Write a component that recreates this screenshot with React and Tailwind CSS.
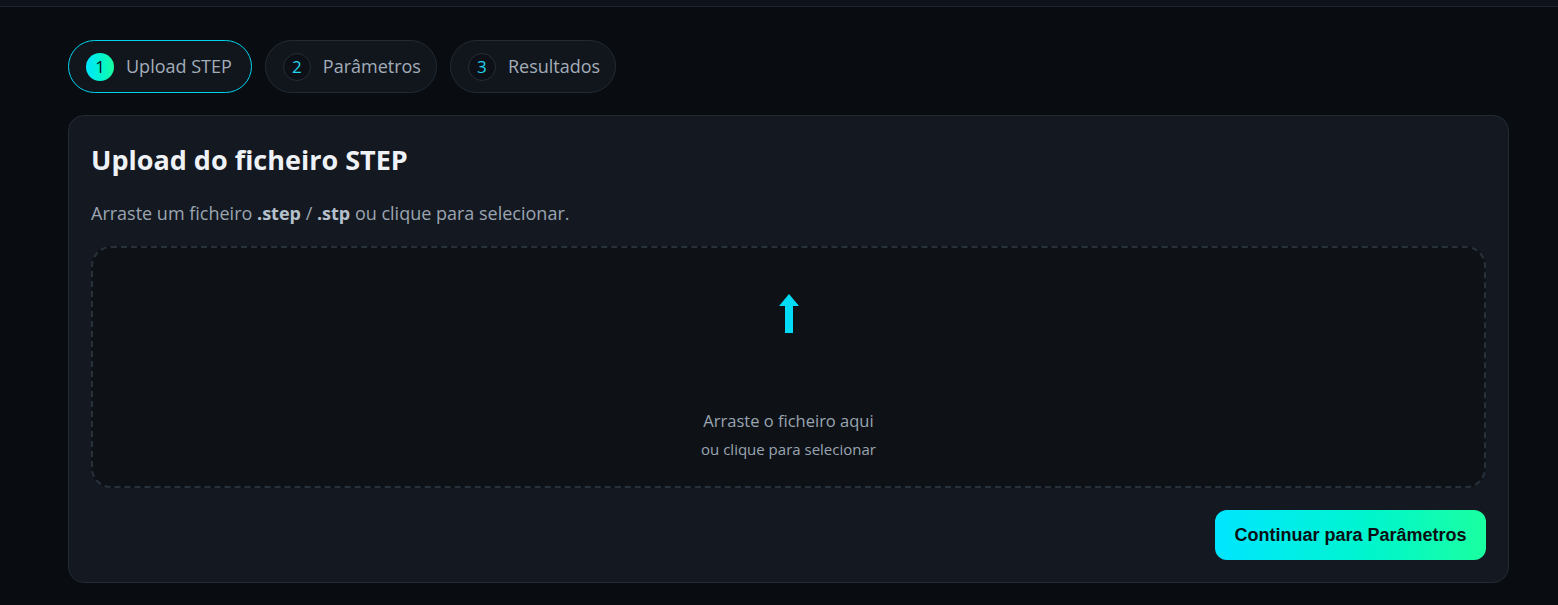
export default function App() {
  const font = { fontFamily: '"Open Sans", "Noto Sans", sans-serif' };
  return (
    <div className="min-h-[605px] w-full bg-[#090d11] text-[#9aa5b1]" style={font}>
      <div className="h-[7px] bg-[#0e121a] border-b border-[#1f2630]" />
      <div className="ml-[68px] w-[1441px] pt-[33px]">
        <div className="flex gap-[13px]">
          <div className="flex h-[53px] items-center gap-[12px] rounded-full border border-[#00d4ee] bg-[#11161d] pl-[17px] pr-[19px]">
            <span className="flex h-[28px] w-[28px] items-center justify-center rounded-full bg-gradient-to-r from-[#00e5ff] to-[#1affa0] text-[17px] text-[#0a0f14]">1</span>
            <span className="text-[18px] leading-[26px] text-[#a3adb9] -translate-y-[1px]">Upload STEP</span>
          </div>
          <div className="flex h-[53px] items-center gap-[12px] rounded-full border border-[#222a33] bg-[#11161d] pl-[17px] pr-[15px]">
            <span className="flex h-[28px] w-[28px] items-center justify-center rounded-full border border-[#252d36] bg-[#0d1117] text-[17px] text-[#22d3ee]">2</span>
            <span className="text-[18px] leading-[26px] text-[#a3adb9] -translate-y-[1px]">Parâmetros</span>
          </div>
          <div className="flex h-[53px] items-center gap-[12px] rounded-full border border-[#222a33] bg-[#11161d] pl-[17px] pr-[15px]">
            <span className="flex h-[28px] w-[28px] items-center justify-center rounded-full border border-[#252d36] bg-[#0d1117] text-[17px] text-[#22d3ee]">3</span>
            <span className="text-[18px] leading-[26px] text-[#a3adb9] -translate-y-[1px]">Resultados</span>
          </div>
        </div>

        <div className="mt-[22px] rounded-[16px] border border-[#232a33] bg-[#141820] px-[22px] pt-[26px] pb-[22px]">
          <h1 className="text-[27px] font-bold leading-[36px] text-[#eef2f7]">Upload do ficheiro STEP</h1>
          <p className="mt-[22px] text-[18px] leading-[27px] text-[#9aa5b1]">
            Arraste um ficheiro <b className="font-bold text-[#b4c0cc]">.step</b> / <b className="font-bold text-[#b4c0cc]">.stp</b> ou clique para selecionar.
          </p>
          <div className="mt-[19px] flex h-[242px] flex-col items-center rounded-[20px] border-2 border-dashed border-[#27313b] bg-[#0e1217]">
            <svg width="22" height="40" viewBox="0 0 22 40" className="mt-[46px]">
              <path d="M11 0 L21 12 L15 12 L15 39 L7 39 L7 12 L1 12 Z" fill="#00dcf5" />
            </svg>
            <div className="mt-[75px] text-[16.5px] leading-[24px] text-[#9aa5b1]">Arraste o ficheiro aqui</div>
            <div className="mt-[6px] text-[15px] leading-[20px] text-[#9aa5b1]">ou clique para selecionar</div>
          </div>
          <div className="mt-[22px] flex justify-end">
            <button
              className="h-[50px] w-[271px] rounded-[12px] bg-gradient-to-r from-[#00e5ff] to-[#1affa0] text-[18px] font-bold text-[#0a0f14]"
              style={{ fontFamily: '"Liberation Sans", Arial, sans-serif' }}
            >
              Continuar para Parâmetros
            </button>
          </div>
        </div>
      </div>
    </div>
  );
}
